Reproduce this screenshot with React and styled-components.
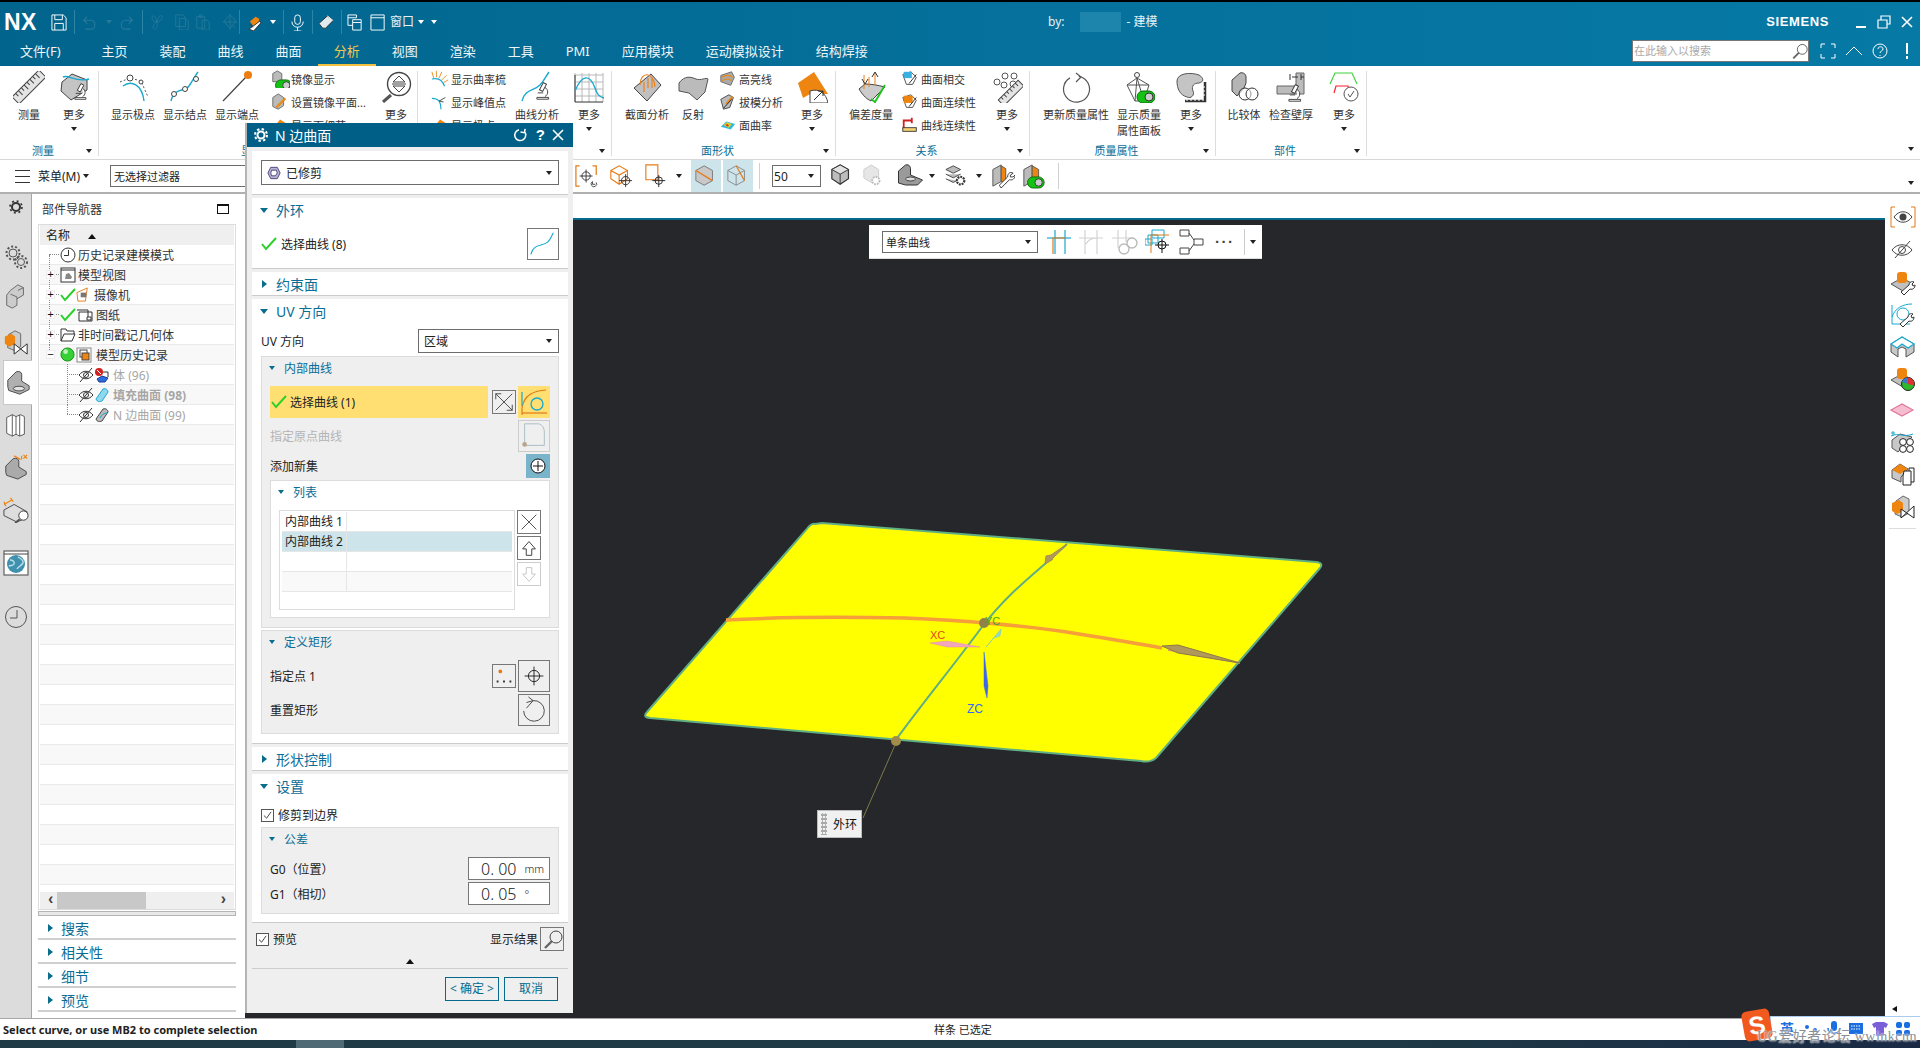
import React from 'react';
import styled, { createGlobalStyle } from 'styled-components';

const GlobalStyle = createGlobalStyle`
  html, body { margin: 0; padding: 0; background: #fff; }
  * { box-sizing: border-box; }
  body { font-family: "Noto Sans", "Noto Sans CJK SC", sans-serif; font-size: 12px; color: #222; }
`;

const Svg = styled.svg`
  display: block;
  flex: none;
`;

const Ico = ({ s = 32, w, h, vb = '0 0 32 32', children }) => (
  <Svg width={w || s} height={h || s} viewBox={vb} fill="none">{children}</Svg>
);

const Micro = ({ x = 0, y = 0, s = 1 }) => (
  <g transform={`translate(${x} ${y}) scale(${s})`} stroke="#333" strokeWidth="1">
    <rect x="6" y="0" width="4" height="9" fill="#fff" transform="rotate(28 8 4)" />
    <path d="M10 5c4 2 4 8 0 10M1 16h13v2H1z" fill="#fff" />
    <path d="M2 11h6" />
  </g>
);

const Toggle = ({ x = 0, y = 0 }) => (
  <g transform={`translate(${x} ${y})`}>
    <rect x="0" y="0" width="18" height="12" rx="6" fill="#13c313" stroke="#0b6a0b" />
    <circle cx="12" cy="6" r="4" fill="#ccc" stroke="#333" />
  </g>
);

const I = {
  ruler: <g transform="rotate(-45 16 16)"><rect x="-3" y="11" width="38" height="10" fill="#e4e4e4" stroke="#444" /><path d="M2 11v4M6 11v6M10 11v4M14 11v6M18 11v4M22 11v6M26 11v4M30 11v6" stroke="#444" /></g>,
  surfMicro: <><path d="M4 11L14 3l15 6v10L13 29 3 20z" fill="#c4c4c4" stroke="#444" /><path d="M5 6c6-3 12 6 26 2" stroke="#18a8d0" strokeWidth="1.4" /><Micro x={16} y={13} s={0.85} /></>,
  poles: <><path d="M6 15c8-6 19-2 21 15" stroke="#18a8d0" strokeWidth="1.4" /><path d="M3 11l10-4 11 3 7 16" stroke="#555" strokeDasharray="2 2" /><circle cx="13" cy="7" r="3" fill="#fff" stroke="#444" /><circle cx="24" cy="11" r="2" fill="#fff" stroke="#444" /></>,
  knots: <><path d="M2 30c3-14 14-9 18-15s6-10 9-14" stroke="#18a8d0" strokeWidth="1.4" /><circle cx="5" cy="23" r="2.5" fill="#fff" stroke="#444" /><circle cx="16" cy="18" r="2.5" fill="#fff" stroke="#444" /><circle cx="27" cy="8" r="2.5" fill="#fff" stroke="#444" /></>,
  endpoint: <><path d="M2 30L25 6" stroke="#444" strokeWidth="1.2" /><circle cx="27" cy="4" r="4" fill="#ee7d11" /></>,
  magDiamond: <><circle cx="19" cy="13" r="11.5" fill="#fff" stroke="#444" strokeWidth="1.4" /><path d="M11 24l-8 7" stroke="#555" strokeWidth="3" /><path d="M13 11l6-6 6 6zM13 15l6 6 6-6z" fill="#fff" stroke="#444" /><path d="M12 13h14" stroke="#444" /></>,
  curveMicro: <><path d="M1 30c3-12 12-10 18-16 4-4 6-9 9-13" stroke="#18a8d0" strokeWidth="1.4" /><Micro x={15} y={12} s={0.9} /></>,
  graph: <><path d="M2 2v29M9 2v29M16 2v29M23 2v29M30 2v29M2 4h28M2 11h28M2 18h28M2 25h28" stroke="#b8b8b8" /><path d="M2 4v27h28" stroke="#333" /><path d="M2 20c7-17 15-17 20-3 2 6 4 9 9 10" stroke="#18a8d0" strokeWidth="1.4" /></>,
  section: <><path d="M3 17L20 3l10 11-14 16z" fill="#c0c0c0" stroke="#444" /><path d="M9 14c0-14 14-14 15 2M13 11v10M17 7v10M21 7v10" stroke="#ee7d11" strokeWidth="1.1" /></>,
  reflect: <path d="M2 12c6-8 12-6 17-4s10-2 12 0l-3 13-8 8-8-7-10-2z" fill="#bbb" stroke="#555" />,
  moreSurf: <><path d="M2 12L18 1l14 22H14L7 27z" fill="#ee8510" /><path d="M14 32V20c9-3 16 2 18 12z" fill="#fff" stroke="#444" /><path d="M18 29l9-9M22 20h5v5" stroke="#333" /></>,
  deviation: <><path d="M4 18c5 8 8 10 12 12l14-14c-8-2-14-3-20-3z" fill="#ccc" stroke="#444" /><path d="M9 4v14M20 2v12M14 6v10" stroke="#ee7d11" /><path d="M7 8l3 5 3-5M17 6l3-5 3 5" stroke="#333" /><path d="M16 28l4 3L30 14" stroke="#21c521" strokeWidth="2" /></>,
  circlesRuler: <><g stroke="#555" fill="#fff"><circle cx="6" cy="11" r="3" /><circle cx="14" cy="5" r="3" /><circle cx="23" cy="5" r="3" /><circle cx="13" cy="14" r="3" /><circle cx="22" cy="13" r="3" /></g><g transform="rotate(-45 20 22)"><rect x="6" y="18" width="28" height="8" fill="#e4e4e4" stroke="#444" /><path d="M10 18v3M14 18v4M18 18v3M22 18v4M26 18v3M30 18v4" stroke="#444" /></g></>,
  update: <><path d="M21 6a13 13 0 1 1-9 0" stroke="#555" strokeWidth="1.2" transform="rotate(-10 16 18)" /><path d="M16 2l5 4-5 5" stroke="#555" strokeWidth="1.2" /></>,
  showPanel: <><path d="M14 7L4 14l8 16h9l5-16zM4 14h22M14 7l-2 23M14 7l7 23" stroke="#555" fill="#fff" /><circle cx="14" cy="4" r="2.5" fill="#fff" stroke="#444" /><Toggle x={14} y={20} /></>,
  blobRuler: <><path d="M2 10C2 2 16 1 24 4c5 3 5 7 0 8-5 0-8 3-6 8 2 4-2 8-6 6C5 24 2 18 2 10z" fill="#c4c4c4" stroke="#555" /><path d="M30 11v19H10" stroke="#333" strokeWidth="2.5" /><path d="M12 28v2M16 28v2M20 28v2M24 28v2M28 28v2M28 24h2M28 20h2M28 16h2" stroke="#fff" /></>,
  compare: <><path d="M4 20V9L12 2c3-1 6 1 6 4v6l-2 5-7 8z" fill="#b5b5b5" stroke="#444" /><circle cx="17" cy="23" r="6" fill="#fff" fillOpacity=".5" stroke="#333" /><circle cx="24" cy="23" r="6" fill="#fff" fillOpacity=".5" stroke="#333" /></>,
  wall: <><path d="M2 15h19V2h8v21H2z" fill="#bcbcbc" stroke="#666" /><path d="M17 6h6M29 6h-3M15 3v6M26 3v6" stroke="#333" /><Micro x={13} y={14} s={0.9} /></>,
  qualityCheck: <><path d="M2 13l5-11h17l5 11" stroke="#3ed43e" strokeWidth="1.2" /><path d="M6 22l2-7h12l2 7" stroke="#ff2030" strokeWidth="1.2" /><circle cx="23" cy="23" r="7" fill="#fff" stroke="#555" /><path d="M20 23l2 3 4-6" stroke="#555" /></>,
};

const Sm = {
  mirror: <><path d="M2 4l5-3 5 3v9H2z" fill="#bbb" stroke="#666" /><Toggle x={5} y={11} /></>,
  setMirror: <><path d="M2 5l6-4 6 4v9l-6 4-6-3z" fill="#bbb" stroke="#666" /><path d="M6 16l7-7 3-3" stroke="#e88a1c" strokeWidth="2.5" /></>,
  third: <path d="M2 14l8-10 8 5-6 8z" fill="#ee8510" />,
  comb: <><path d="M1 10c8-2 12 2 14 8" stroke="#18a8d0" strokeWidth="1.3" /><path d="M3 9L1 2M6 8l0-7M9 9l3-7M12 11l5-5M14 14l5-3" stroke="#ee8510" /></>,
  peak: <><path d="M1 6c7 0 10 3 10 12" stroke="#18a8d0" strokeWidth="1.3" /><path d="M9 9l7-4M9 9l5 1" stroke="#444" /></>,
  highlight: <><path d="M2 6l12-4 3 6-4 9-11-4z" fill="#aaa" stroke="#666" /><path d="M3 8c5-3 8-3 12 0M3 12c5-3 8-3 11 0" stroke="#ee8510" strokeWidth="1.2" /></>,
  draft: <><path d="M2 7l9-5 5 3-4 11-7 2z" fill="#bbb" stroke="#444" /><path d="M8 12l7-8" stroke="#ee8510" strokeWidth="2" /><path d="M5 17l9-10" stroke="#222" /></>,
  curvature: <><path d="M2 12l6-6 10 3-5 6z" fill="#3bd" /><path d="M5 10l4-3 5 2-3 4z" fill="#e8d020" /><path d="M7 10l2-1 2 1-1 2z" fill="#e03020" /></>,
  intersect: <><path d="M2 5l9-3 6 6-4 8H6z" fill="#fff" stroke="#444" /><rect x="3" y="2" width="9" height="7" fill="#3ab0e0" /><path d="M9 15l8-10" stroke="#222" /></>,
  contSurf: <><path d="M2 5l9-3 6 6-4 8H6z" fill="#fff" stroke="#444" /><rect x="3" y="3" width="10" height="8" fill="#ee8510" /><path d="M9 15l8-10" stroke="#222" /></>,
  contCurve: <><path d="M3 15V5h9" stroke="#d02020" strokeWidth="2" /><path d="M12 2v6" stroke="#d02020" strokeWidth="2" /><rect x="2" y="13" width="15" height="4" fill="#f7d070" stroke="#333" /></>,
};

const Qa = {
  save: <><path d="M1 1h12l3 3v13H1z" stroke="#fff" /><path d="M4 1v5h8V1M4 17v-7h9v7" stroke="#fff" /></>,
  undo: <path d="M3 7h8c6 0 6 10 0 10H5M7 3L3 7l4 4" stroke="#27799a" strokeWidth="1.3" />,
  redo: <path d="M14 7H6c-6 0-6 10 0 10h6M10 3l4 4-4 4" stroke="#27799a" strokeWidth="1.3" />,
  fan: <path d="M9 9C3 9 2 3 5 2c2 0 3 4 4 7zM9 9c6-1 7-6 5-7-3-1-4 4-5 7zM9 9c-4 2-6 7-3 8 3 0 4-4 3-8z" stroke="#27799a" />,
  copy: <path d="M2 1h8l3 3v10H2zM6 5h7l3 3v10H6z" stroke="#27799a" />,
  paste: <path d="M2 3h9v13H2zM5 1h3v3H5zM8 7h6l2 2v9H8z" stroke="#27799a" />,
  sel: <path d="M9 1l7 7-7 8-7-8zM1 9h16M9 0v18M11 12l4 4" stroke="#27799a" />,
  tool: <><path d="M3 8l6-5 4 2-1 6-5 2z" fill="#ee8510" /><path d="M3 11l3 3M5 14l8-6 2 1-8 9-5-2z" fill="#fff" stroke="#333" /></>,
  mic: <><rect x="5" y="1" width="6" height="10" rx="3" stroke="#fff" /><path d="M2 8c0 8 12 8 12 0M8 14v4M4 18h8" stroke="#fff" /></>,
  erase: <><path d="M1 10l9-8 6 5-8 8H5z" fill="#dfe9ee" stroke="#333" /><path d="M10 2l6 5" stroke="#fff" /></>,
  win1: <path d="M1 1h9v3H1zM1 4v8h5M6 6h9v3H6zM6 9v8h9V9" stroke="#fff" />,
  win2: <path d="M1 1h14v16H1zM1 4h14" stroke="#fff" />,
};

const Bar = {
  orangeTrim: <><path d="M5 2H1v22h4M19 2h4v10" stroke="#e57a14" strokeWidth="1.3" /><circle cx="12" cy="13" r="4.5" stroke="#333" /><path d="M12 6v14M5 13h14" stroke="#333" /><path d="M23 20a3 3 0 1 1-4-1m0 0v3h3" stroke="#444" /></>,
  orangeCube: <><path d="M2 7l9-5 9 5v9l-9 6-9-6zM2 7l9 5 9-5M11 12v10" stroke="#e57a14" strokeWidth="1.2" fill="#fff" /><circle cx="18" cy="18" r="4.5" stroke="#333" /><path d="M18 11v14M11 18h14" stroke="#333" /></>,
  orangeRect: <><path d="M2 1h13v16H2z" stroke="#e57a14" strokeWidth="1.2" /><circle cx="16" cy="18" r="4" stroke="#222" /><path d="M16 12v13M9 18h14" stroke="#222" /></>,
  view1: <><path d="M2 7l9-5 9 5v11l-9 5-9-5z" fill="#c8c8c8" stroke="#777" /><path d="M2 7l18 11" stroke="#e57a14" strokeWidth="1.4" /></>,
  view2: <><path d="M2 7l9-5 9 5v11l-9 5-9-5zM11 12v11M2 7l9 5 9-5" stroke="#888" /><path d="M11 2l9 16" stroke="#e57a14" strokeWidth="1.2" /></>,
  cube: <><path d="M2 6l9-5 9 5v10l-9 6-9-6z" fill="#bdbdbd" stroke="#333" strokeWidth="1.3" /><path d="M2 6l9 5 9-5L11 1z" fill="#e2e2e2" stroke="#333" /><path d="M11 11v11" stroke="#333" /></>,
  cubeGear: <><path d="M2 6l8-5 8 5v9l-8 5-8-5z" fill="#e6e6e6" stroke="#ccc" /><circle cx="15" cy="18" r="4" fill="#fff" stroke="#bbb" strokeWidth="2" strokeDasharray="2 1" /></>,
  bracket: <><path d="M2 20V8l7-6c4-1 5 2 5 4v6l12 5-5 5H9z" fill="#9a9a9a" stroke="#333" /><ellipse cx="14" cy="16" rx="5" ry="2" fill="#ddd" stroke="#444" /></>,
  stack: <><path d="M2 6l8-4 8 4-8 4zM2 11l8 4 8-4M2 16l8 4 4-2" fill="#bbb" stroke="#444" /><circle cx="18" cy="18" r="4" fill="#fff" stroke="#333" strokeWidth="2.4" strokeDasharray="2 1" /></>,
  doorWrench: <><path d="M2 6l9-5v18l-9 5z" fill="#bbb" stroke="#555" /><path d="M11 2l5 3v16l-5-2z" fill="#ee8510" stroke="#555" /><path d="M9 23l9-9c0-4 3-6 6-4l-3 2v2h3l2-2c0 4-3 6-6 5l-9 9z" fill="#fff" stroke="#333" /></>,
  doorToggle: <><path d="M2 6l9-5v18l-9 5z" fill="#bbb" stroke="#555" /><path d="M11 2l7 4v14l-7-1z" fill="#ee8510" stroke="#555" /><Toggle x={6} y={14} /></>,
};

const Float = {
  trim1: <><path d="M8 1v24M18 1v24" stroke="#18a8d0" strokeWidth="1.2" /><path d="M0 9h24" stroke="#18a8d0" strokeWidth="1.2" /><path d="M6 25V9h12" stroke="#e57a14" strokeWidth="1.2" /></>,
  trim2: <path d="M6 1v24M18 1v24M0 9h24M7 15c2-4 6-6 11-6" stroke="#d2d2d2" strokeWidth="1.2" />,
  trim3: <><path d="M6 1v18M14 1v12M0 9h22" stroke="#d2d2d2" strokeWidth="1.2" /><circle cx="20" cy="14" r="5" stroke="#bbb" strokeWidth="1.4" /><circle cx="12" cy="20" r="5" stroke="#bbb" strokeWidth="1.4" /></>,
  rects: <><path d="M7 1h12v8H7zM3 6h10v8H3zM0 10h7v6H0z" stroke="#18a8d0" fill="#fff" /><path d="M6 24V6h18" stroke="#e57a14" /><circle cx="17" cy="16" r="4" stroke="#111" /><path d="M17 10v14M10 16h14" stroke="#111" /></>,
  tree: <path d="M1 1h9v6H1zM1 19h9v6H1zM15 10h9v6h-9zM10 4l5 7M10 22l5-7" stroke="#444" />,
};

const Rail = {
  gear: <><circle cx="8" cy="8" r="4" stroke="#333" strokeWidth="2" /><circle cx="8" cy="8" r="6" stroke="#333" strokeWidth="1.6" strokeDasharray="2 2.7" /></>,
  gears: <g stroke="#555"><circle cx="9" cy="8" r="4" /><circle cx="9" cy="8" r="6.5" strokeWidth="2" strokeDasharray="2 2" /><circle cx="17" cy="17" r="3.5" /><circle cx="17" cy="17" r="6" strokeWidth="2" strokeDasharray="2 2" /></g>,
  blocks: <><path d="M8 8l8-6 6 3v8l-7 4v7l-5 3-6-3V13z" fill="#ccc" stroke="#666" /><path d="M8 12l7 3v2M16 8l6-3" stroke="#666" /></>,
  orangeBow: <><path d="M6 6l7-4 6 3v14l-7 4-7-3z" fill="#ccc" stroke="#666" /><path d="M2 8l7-3 4 3v8l-6 3-5-3z" fill="#ee8510" /><path d="M12 16l14 11V16L12 27z" fill="#fff" stroke="#222" /></>,
  bracket: <><path d="M3 18V11l9-9c3-1 6 0 6 3v7l8 5v4l-10 5-12-4z" fill="#b0b0b0" stroke="#444" /><ellipse cx="15" cy="20" rx="6" ry="2.5" fill="#e2e2e2" stroke="#444" /></>,
  book: <path d="M4 7l6-3 4 2v19l-4 2-6-3zM10 4v23M14 6l5-2 4 2v19l-5 2-4-2M18 4v23" stroke="#555" fill="#fff" />,
  dimBracket: <><path d="M3 20V13l8-8c3-1 6 0 6 3v6l8 5v3l-9 5-12-4z" fill="#aaa" stroke="#444" /><path d="M12 2l7 4M20 6V2M22 1l4 4M26 1l-4 4" stroke="#ee8510" strokeWidth="1.3" /></>,
  dimMag: <><path d="M1 14l11-6 14 8v6l-11 5-14-7z" fill="#ddd" stroke="#444" /><path d="M1 8l9-5M1 5l2 5M8 1l3 4" stroke="#ee8510" strokeWidth="1.3" /><circle cx="22" cy="20" r="5" fill="#fff" stroke="#333" /><path d="M18 24l-5 4" stroke="#555" strokeWidth="2" /></>,
  globe: <><rect x="1" y="1" width="24" height="24" stroke="#444" fill="#fff" /><path d="M1 4h24" stroke="#444" /><circle cx="13" cy="14" r="9" fill="#3f91ad" /><path d="M7 10c3 0 5 2 4 4s-3 1-5 2M15 7c3 2 6 3 5 6-2 3-5 4-6 6" stroke="#bfe0ea" strokeWidth="1.4" /></>,
  clock: <><circle cx="12" cy="12" r="10.5" stroke="#555" /><path d="M13 5v8H6" stroke="#555" /></>,
};

const RR = {
  show: <><path d="M1 1h4M1 1v20h4M21 1h4v20h-4" stroke="#e57a14" /><path d="M4 11c5-7 13-7 18 0-5 7-13 7-18 0z" stroke="#444" /><circle cx="13" cy="11" r="3.5" fill="#444" /></>,
  hide: <><path d="M2 12c5-7 15-7 20 0-5 7-15 7-20 0z" stroke="#444" /><circle cx="12" cy="12" r="3.5" stroke="#444" /><path d="M5 20L20 3" stroke="#444" /></>,
  tank: <><path d="M1 14l11-6 11 6-10 7z" fill="#c0c0c0" stroke="#555" /><rect x="7" y="2" width="10" height="11" rx="3" fill="#ee8510" /><path d="M11 22l8-7c0-3 3-4 5-3l-2 2 1 2 2-1c0 3-2 5-5 4l-6 6z" fill="#fff" stroke="#333" /></>,
  curveWrench: <><path d="M2 15C5 6 13 2 22 2M2 3v19h18" stroke="#18a8d0" /><circle cx="13" cy="12" r="6" stroke="#18a8d0" /><path d="M10 22l8-7c0-3 3-4 5-3l-2 2 1 2 2-1c0 3-2 5-5 4l-6 6z" fill="#fff" stroke="#333" /></>,
  uBlock: <><path d="M1 10l11-7 12 7v8l-8 5V15l-4-2-4 2v8l-7-5z" fill="#c8c8c8" stroke="#555" /><path d="M1 10l11-7 12 7-6 4-6-4-5 4z" fill="#fff" stroke="#18a8d0" strokeWidth="1.3" /></>,
  tankPie: <><path d="M1 14l11-6 11 6-10 7z" fill="#c0c0c0" stroke="#555" /><rect x="7" y="2" width="10" height="11" rx="3" fill="#ee8510" /><circle cx="18" cy="18" r="6.5" fill="#2db82d" stroke="#222" /><path d="M18 18V11.5a6.5 6.5 0 0 1 6 8z" fill="#e03030" /><path d="M18 18l-6-2a6.5 6.5 0 0 1 6-4.5z" fill="#3a78c8" /></>,
  diamond: <path d="M1 12l11-6 11 6-11 6z" fill="#f6bdd0" stroke="#e0789c" strokeWidth="1.2" />,
  rings: <><path d="M2 10l8-6 12 3-6 6-8 9-6-4z" fill="#c8c8c8" stroke="#555" /><path d="M1 6c8-4 12 2 22-2M3 1v5M1 3h4" stroke="#18a8d0" /><g stroke="#222" fill="#fff"><circle cx="13" cy="12" r="3.4" /><circle cx="20" cy="12" r="3.4" /><circle cx="13" cy="19" r="3.4" /><circle cx="20" cy="19" r="3.4" /></g></>,
  copy: <><path d="M2 8l8-6 8 5-7 8v5l-9-4z" fill="#c8c8c8" stroke="#555" /><path d="M2 8l8-6 8 5-8 5z" fill="#ee8510" /><path d="M14 9h7v14h-8v-9zM19 9v-3h5v14h-3" fill="#fff" stroke="#222" /></>,
  bow: <><path d="M6 7l7-5 6 3v14l-7 4-7-3z" fill="#ccc" stroke="#666" /><path d="M2 9l7-3 4 3v8l-6 3-5-3z" fill="#ee8510" /><path d="M11 15l13 9V12L11 24z" fill="#fff" stroke="#222" /></>,
};

const Dlg = {
  trimmed: <><path d="M2 8l3-6h7l3 6-3 6H5z" fill="#b8b3d6" stroke="#4a4478" /><path d="M6 5h5l1 3-2 3H6L5 8z" fill="#fff" stroke="#4a4478" /></>,
  check: <path d="M1 8l4 5L15 2" stroke="#2bd02b" strokeWidth="2" />,
  curve: <path d="M3 27c3-12 12-8 18-13 3-3 4-6 6-10" stroke="#18a8d0" strokeWidth="1.2" />,
  cross: <path d="M3 3l18 18M21 3L3 21M3 3v6M3 3h6M21 21v-6M21 21h-6" stroke="#444" />,
  curveCircle: <><path d="M4 29V22C6 9 15 5 28 4" stroke="#e57a14" strokeWidth="1.2" /><path d="M4 27h25" stroke="#e57a14" strokeWidth="1.2" /><path d="M4 6v14" stroke="#18a8d0" strokeWidth="1.2" /><circle cx="19" cy="18" r="6" stroke="#18a8d0" strokeWidth="1.3" /></>,
  origin: <><path d="M6 26V3h14c5 0 7 5 7 9v14H6" stroke="#a9bcc4" /><circle cx="6" cy="25" r="2.5" fill="#b7a68c" /></>,
  plus: <><circle cx="12" cy="12" r="7" fill="#fff" stroke="#111" /><path d="M12 7v10M7 12h10" stroke="#111" /></>,
  close: <path d="M4 4l16 16M20 4L4 20" stroke="#444" />,
  up: <path d="M12 5l7 8h-4v7H9v-7H5z" stroke="#333" />,
  down: <path d="M12 20l7-8h-4V5H9v7H5z" stroke="#c4c4c4" />,
  points: <><circle cx="8" cy="7" r="2" fill="#e57a14" /><path d="M4 18h2M11 18h2M18 18h2" stroke="#333" strokeWidth="2" /></>,
  cross2: <><circle cx="16" cy="16" r="6" stroke="#222" /><path d="M16 6v20M6 16h20" stroke="#222" /></>,
  reset: <path d="M15 6A11 11 0 1 1 5 17M15 6L8 14M10 2l5 4-7 2" stroke="#444" />,
  mag: <><circle cx="15" cy="9" r="6" stroke="#444" /><path d="M11 13l-7 7" stroke="#666" strokeWidth="2.4" /></>,
};

const Root = styled.div`
  position: relative;
  width: 1920px;
  height: 1048px;
  overflow: hidden;
  display: flex;
  flex-direction: column;
  background: #fff;
  border-top: 2px solid #000;
`;

const Head = styled.header`
  height: 64px;
  flex: none;
  color: #fff;
  background: linear-gradient(90deg, #01648c 0%, #05709b 50%, #0679a5 100%);
`;

const TitleRow = styled.div`
  height: 34px;
  padding-top: 6px;
  display: flex;
  align-items: center;
`;

const Quick = styled.div`
  width: 1048px;
  flex: none;
  display: flex;
  align-items: center;
`;

const NxLogo = styled.span`
  width: 42px;
  padding-left: 4px;
  font: bold 23px/28px "Liberation Sans", sans-serif;
  letter-spacing: .5px;
  flex: none;
`;

const QaSlot = styled.span`
  display: block;
  flex: none;
  margin-left: ${p => p.$ml || 0}px;
`;

const QaSep = styled.span`
  display: block;
  width: 1px;
  height: 24px;
  flex: none;
  background: #2d84a6;
  margin-left: ${p => p.$ml || 0}px;
`;

const Tri = styled.span`
  display: block;
  flex: none;
  width: 0;
  height: 0;
  border-left: ${p => p.$s || 3}px solid transparent;
  border-right: ${p => p.$s || 3}px solid transparent;
  border-top: ${p => (p.$s || 3) + 1}px solid ${p => p.$c || '#222'};
  margin-left: ${p => p.$ml || 0}px;
`;

const TitleText = styled.span`
  font-size: 12px;
  line-height: 28px;
  color: #e8f2f6;
  white-space: nowrap;
  margin-left: ${p => p.$ml || 0}px;
`;

const Redacted = styled.span`
  display: block;
  width: 41px;
  height: 20px;
  margin-left: 16px;
  margin-right: 5px;
  background: #1d85ac;
`;

const WinGroup = styled.div`
  margin-left: auto;
  display: flex;
  align-items: center;
  padding-right: 6px;
`;

const Siemens = styled.span`
  font: 900 13px/28px "Liberation Sans", sans-serif;
  letter-spacing: .6px;
  margin-right: 26px;
`;

const TabRow = styled.nav`
  height: 30px;
  display: flex;
  align-items: stretch;
  padding-left: 4px;
`;

const Tab = styled.div`
  padding: 0 16px;
  font-size: 13px;
  line-height: 30px;
  white-space: nowrap;
  color: ${p => (p.$on ? '#f5c64a' : '#eef5f8')};
  border-bottom: 2px solid ${p => (p.$on ? '#f0c040' : 'transparent')};
  margin-left: ${p => p.$ml || 0}px;
`;

const SearchBox = styled.div`
  position: absolute;
  top: 38px;
  left: 1632px;
  width: 177px;
  height: 22px;
  background: #fff;
  border: 1px solid #777;
  color: #aaa;
  font-size: 11px;
  line-height: 20px;
  padding-left: 1px;
  display: flex;
  justify-content: space-between;
  align-items: center;
`;

const HeadTools = styled.div`
  position: absolute;
  top: 40px;
  left: 1820px;
  display: flex;
  align-items: center;
`;

const Ribbon = styled.section`
  height: 94px;
  flex: none;
  display: flex;
  border-bottom: 1px solid #d8d8d8;
  position: relative;
`;

const Group = styled.div`
  width: ${p => p.$w}px;
  flex: none;
  height: 85px;
  margin-top: 5px;
  padding-left: ${p => p.$pl || 0}px;
  border-right: 1px solid #ddd;
  position: relative;
`;

const GroupBody = styled.div`
  display: flex;
  height: 70px;
`;

const GroupFoot = styled.div`
  position: absolute;
  left: 0;
  right: 0;
  bottom: -3px;
  height: 16px;
  display: flex;
  align-items: center;
  padding-right: 6px;
`;

const GroupTitle = styled.span`
  flex: 1;
  text-align: center;
  color: #0a6d96;
  font-size: 11px;
  line-height: 16px;
`;

const Big = styled.div`
  width: ${p => p.$w || 42}px;
  margin-left: ${p => p.$ml || 0}px;
  flex: none;
  display: flex;
  flex-direction: column;
  align-items: center;
  font-size: 11px;
  line-height: 16px;
  text-align: center;
  color: #333;
`;

const BigLabel = styled.div`
  margin-top: 4px;
  white-space: nowrap;
`;

const BigArrow = styled(Tri)`
  margin-top: 4px;
`;

const Stack = styled.div`
  width: ${p => p.$w}px;
  margin-left: ${p => p.$ml || 0}px;
  margin-top: -4px;
  flex: none;
`;

const SmallTool = styled.div`
  height: 23px;
  display: flex;
  align-items: center;
  gap: ${p => p.$gap ?? 1}px;
  font-size: 11px;
  color: #333;
  white-space: nowrap;
`;

const EndArrow = styled(Tri)`
  position: absolute;
  left: 1908px;
  top: ${p => p.$top}px;
`;

const Toolbar = styled.section`
  height: 34px;
  flex: none;
  display: flex;
  align-items: center;
  border-bottom: 2px solid #b0b0b0;
  position: relative;
`;

const Burger = styled.span`
  display: block;
  width: 15px;
  height: 13px;
  margin-left: 15px;
  border-top: 1px solid #333;
  border-bottom: 1px solid #333;
  position: relative;
  &::after {
    content: "";
    position: absolute;
    left: 0;
    right: 0;
    top: 5px;
    height: 1px;
    background: #333;
  }
`;

const MenuLabel = styled.span`
  margin-left: 8px;
  font-size: 12px;
  white-space: nowrap;
`;

const Select = styled.div`
  width: ${p => p.$w}px;
  height: ${p => p.$h || 22}px;
  flex: none;
  margin-left: ${p => p.$ml || 0}px;
  border: 1px solid #6c6c6c;
  background: #fff;
  display: flex;
  align-items: center;
  padding: 0 6px 0 ${p => p.$pl ?? 3}px;
  gap: 4px;
  font-size: ${p => p.$fs || 12}px;
  white-space: nowrap;
  color: #222;
`;

const SelectText = styled.span`
  flex: 1;
`;

const TbSlot = styled.span`
  display: block;
  flex: none;
  margin-left: ${p => p.$ml || 0}px;
  background: ${p => (p.$on ? '#cde4ea' : 'transparent')};
  padding: ${p => (p.$on ? '3px' : '0')};
`;

const TbSep = styled.span`
  display: block;
  flex: none;
  width: 1px;
  height: 26px;
  background: #d0d0d0;
  margin-left: ${p => p.$ml || 0}px;
`;

const Main = styled.main`
  flex: none;
  height: 824px;
  display: flex;
`;

const LeftRail = styled.aside`
  width: 32px;
  flex: none;
  background: #dcdcdc;
  border-right: 1px solid #a6a6a6;
  display: flex;
  flex-direction: column;
`;

const RailItem = styled.div`
  height: ${p => p.$h}px;
  margin-top: ${p => p.$mt || 0}px;
  margin-left: ${p => (p.$on ? 3 : 0)}px;
  margin-right: ${p => (p.$on ? -1 : 0)}px;
  flex: none;
  display: flex;
  align-items: center;
  justify-content: center;
  background: ${p => (p.$on ? '#fff' : 'transparent')};
  border: ${p => (p.$on ? '1px solid #c8c8c8' : '0')};
  border-right: 0;
  position: relative;
  z-index: 1;
`;

const Navigator = styled.aside`
  width: 213px;
  flex: none;
  display: flex;
  flex-direction: column;
  padding-left: 6px;
  padding-right: 9px;
`;

const NavHead = styled.div`
  height: 30px;
  flex: none;
  display: flex;
  align-items: center;
  justify-content: space-between;
  padding: 0 7px 0 4px;
  font-size: 12px;
  color: #333;
`;

const Maximize = styled.span`
  display: block;
  width: 12px;
  height: 10px;
  border: 1px solid #111;
  border-top-width: 2px;
`;

const NavTable = styled.div`
  flex: none;
  height: 686px;
  border: 1px solid #dcdcdc;
  padding: 0 1px;
  display: flex;
  flex-direction: column;
  overflow: hidden;
`;

const NavHeader = styled.div`
  height: 20px;
  flex: none;
  background: #efefef;
  display: flex;
  align-items: center;
  padding-left: 6px;
  gap: 18px;
  font-size: 12px;
`;

const Rows = styled.div`
  flex: 1;
  overflow: hidden;
`;

const TreeRow = styled.div`
  height: 20px;
  display: flex;
  align-items: center;
  position: relative;
  padding-left: ${p => p.$pl || 20}px;
  gap: ${p => p.$gap ?? 2}px;
  border-bottom: 1px solid #eaeaea;
  background: ${p => (p.$alt ? '#f8f8f8' : '#fff')};
  white-space: nowrap;
  font-size: 12px;
  font-weight: ${p => (p.$bold ? 700 : 400)};
  color: ${p => (p.$dim ? '#a6a6a6' : '#333')};
`;

const Expander = styled.span`
  position: absolute;
  left: 6px;
  top: 5px;
  width: 9px;
  height: 9px;
  background: #fff;
  color: #111;
  font: 11px/8px "Liberation Mono", monospace;
  text-align: center;
  border: 1px solid #eee;
`;

const GuideV = styled.span`
  position: absolute;
  left: ${p => p.$x}px;
  top: ${p => p.$t ?? -1}px;
  bottom: ${p => p.$b ?? -1}px;
  border-left: 1px dotted #888;
`;

const GuideH = styled.span`
  position: absolute;
  left: ${p => p.$x}px;
  width: ${p => p.$w}px;
  top: 9px;
  border-top: 1px dotted #888;
`;

const HScroll = styled.div`
  height: 17px;
  flex: none;
  background: #efefef;
  display: flex;
  align-items: center;
  padding: 0 6px;
  position: relative;
`;

const Thumb = styled.span`
  display: block;
  position: absolute;
  left: 17px;
  width: 89px;
  top: 0;
  bottom: 0;
  background: #c8c8c8;
`;

const ScrollRow = styled.div`
  width: 100%;
  display: flex;
  justify-content: space-between;
  color: #444;
  font: 700 16px/15px "Liberation Mono", monospace;
`;

const Splitter = styled.div`
  height: 5px;
  flex: none;
  margin-top: 1px;
  background: #e8e8e8;
  border: 1px solid #b4b4b4;
`;

const NavFold = styled.div`
  height: 24px;
  flex: none;
  display: flex;
  align-items: center;
  gap: 8px;
  padding-left: 10px;
  border-bottom: 2px solid #cfcfcf;
  color: #0a6d96;
  font-size: 14px;
  padding-top: 2px;
`;

const RightTri = styled.span`
  display: block;
  flex: none;
  width: 0;
  height: 0;
  border-top: ${p => p.$s || 4.5}px solid transparent;
  border-bottom: ${p => p.$s || 4.5}px solid transparent;
  border-left: ${p => (p.$s || 4.5) + 1}px solid #0a6d8c;
`;

const Viewport = styled.div`
  flex: none;
  width: 1640px;
  display: flex;
  flex-direction: column;
`;

const ViewTop = styled.div`
  height: 26px;
  flex: none;
  background: #fff;
  border-bottom: 2px solid #056a8c;
`;

const Canvas = styled.div`
  flex: 1;
  background: #25272b;
  position: relative;
`;

const ModelSvg = styled.svg`
  position: absolute;
  left: 0;
  top: 0;
  width: 100%;
  height: 100%;
`;

const FloatBar = styled.div`
  position: absolute;
  left: 624px;
  top: 5px;
  width: 393px;
  height: 34px;
  background: #fff;
  border-bottom: 1px solid #ddd;
  display: flex;
  align-items: center;
`;

const FloatSlot = styled.span`
  display: block;
  flex: none;
  margin-left: ${p => p.$ml}px;
`;

const FloatSep = styled.span`
  display: block;
  flex: none;
  width: 1px;
  height: 26px;
  background: #ccc;
  margin-left: 9px;
`;

const Dots = styled.span`
  display: block;
  flex: none;
  color: #444;
  font: 700 15px/16px "Liberation Sans", sans-serif;
  margin-left: 10px;
  letter-spacing: 1.5px;
`;

const Callout = styled.div`
  position: absolute;
  left: 572px;
  top: 590px;
  width: 45px;
  height: 28px;
  background: #f1f1f1;
  border: 1px solid #bbb;
  display: flex;
  align-items: center;
  font-size: 12px;
  color: #111;
  padding-left: 3px;
  gap: 6px;
`;

const Grip = styled.span`
  display: block;
  width: 6px;
  height: 22px;
  background-image: radial-gradient(#aaa 1.1px, transparent 1.3px);
  background-size: 3px 4px;
`;

const RightRail = styled.aside`
  flex: 1;
  background: #fff;
  display: flex;
  flex-direction: column;
  align-items: center;
  padding-top: 9px;
`;

const RightItem = styled.div`
  height: 32px;
  flex: none;
  display: flex;
  align-items: center;
`;

const RightSep = styled.div`
  width: 27px;
  height: 1px;
  margin-top: 5px;
  background: #ddd;
`;

const Status = styled.footer`
  height: 22px;
  flex: none;
  border-top: 1px solid #a8a8a8;
  background: #fff;
  display: flex;
  align-items: center;
  padding-left: 3px;
  position: relative;
`;

const StatusText = styled.span`
  font: 700 11px/20px "Noto Sans", "Noto Sans CJK SC", sans-serif;
  color: #222;
`;

const StatusCenter = styled.span`
  position: absolute;
  left: 934px;
  top: 0;
  font-size: 11px;
  line-height: 21px;
  color: #222;
`;

const Taskbar = styled.div`
  flex: 1;
  background: linear-gradient(90deg, #1f3a45 0%, #1f3a45 70%, #1a2a45 100%);
  position: relative;
`;

const TaskPatch = styled.span`
  position: absolute;
  left: 296px;
  top: 0;
  bottom: 0;
  width: 48px;
  background: #4f6a75;
`;

const Ime = styled.div`
  position: absolute;
  left: 1770px;
  top: 1014px;
  width: 150px;
  height: 24px;
  background: #fff;
  border-top: 1px solid #a9cdf0;
  border-left: 1px solid #a9cdf0;
  display: flex;
  align-items: center;
  padding-left: 9px;
`;

const ImeLogo = styled.div`
  position: absolute;
  left: 1743px;
  top: 1008px;
  width: 28px;
  height: 30px;
  background: #f2591f;
  border-radius: 5px;
  transform: rotate(-10deg);
  color: #fff;
  font: 900 25px/30px "Liberation Sans", sans-serif;
  text-align: center;
`;

const ImeLang = styled.span`
  color: #1a6ee0;
  font-size: 14px;
  font-weight: 700;
  line-height: 24px;
`;

const ImeSlot = styled.span`
  display: block;
  flex: none;
  margin-left: ${p => p.$ml}px;
`;

const Watermark = styled.div`
  position: absolute;
  left: 1757px;
  top: 1026px;
  font: 14px/18px "Liberation Serif", "Noto Sans CJK SC", serif;
  letter-spacing: .5px;
  color: #8a8f96;
  text-shadow: 0 0 2px #fff, 0 0 2px #fff;
  white-space: nowrap;
`;

const MiniTri = styled.span`
  position: absolute;
  left: 1892px;
  top: 1004px;
  border-top: 3px solid transparent;
  border-bottom: 3px solid transparent;
  border-right: 5px solid #111;
`;

/* dialog */
const Dialog = styled.div`
  position: absolute;
  left: 245px;
  top: 121px;
  width: 328px;
  height: 890px;
  background: #efefef;
  border-left: 2px solid #b4b4b4;
  display: flex;
  flex-direction: column;
  z-index: 5;
`;

const DialogHead = styled.div`
  height: 24px;
  flex: none;
  background: #005f86;
  color: #fff;
  font-size: 14px;
  display: flex;
  align-items: center;
  padding: 0 8px 0 6px;
  gap: 6px;
`;

const DialogTitle = styled.span`
  flex: 1;
`;

const HeadBtn = styled.span`
  display: block;
  flex: none;
  margin-left: ${p => p.$ml || 0}px;
  font: 700 15px/24px "Liberation Sans", sans-serif;
`;

const DialogBody = styled.div`
  flex: none;
  padding: 4px 5px 0 5px;
  display: flex;
  flex-direction: column;
  gap: 3px;
`;

const Section = styled.section`
  height: ${p => p.$h}px;
  flex: none;
  background: #fff;
  border-bottom: 1px solid #ccc;
  padding: 0 9px;
  display: flex;
  flex-direction: column;
`;

const SecTitle = styled.div`
  height: 26px;
  flex: none;
  display: flex;
  align-items: center;
  padding-bottom: 2px;
  margin-left: ${p => (p.$closed ? 1 : -1)}px;
  gap: ${p => (p.$closed ? 9 : 8)}px;
  color: #0a6d96;
  font-size: 14px;
  white-space: nowrap;
`;

const BoxTitle = styled.div`
  height: 24px;
  flex: none;
  display: flex;
  align-items: center;
  padding-bottom: 2px;
  gap: 9px;
  margin-left: -1px;
  color: #0a6d96;
  font-size: 12px;
`;

const Row = styled.div`
  height: ${p => p.$h}px;
  flex: none;
  margin-top: ${p => p.$mt || 0}px;
  display: flex;
  align-items: center;
  justify-content: space-between;
  gap: ${p => p.$gap ?? 0}px;
  font-size: 12px;
  color: ${p => (p.$dim ? '#b4b4b4' : '#222')};
  white-space: nowrap;
`;

const Left = styled.span`
  display: flex;
  align-items: center;
  gap: ${p => p.$gap ?? 4}px;
`;

const Btn = styled.span`
  display: flex;
  align-items: center;
  justify-content: center;
  flex: none;
  width: ${p => p.$s}px;
  height: ${p => p.$s}px;
  border: 1px solid ${p => (p.$off ? '#ccc' : '#777')};
  background: ${p => p.$bg || 'transparent'};
  ${p => p.$flat && 'border: 0;'}
`;

const Inset = styled.div`
  flex: none;
  height: ${p => p.$h}px;
  margin-top: ${p => p.$mt || 0}px;
  background: #efefef;
  border: 1px solid #dcdcdc;
  padding: 0 8px;
  display: flex;
  flex-direction: column;
`;

const YellowRow = styled.div`
  flex: 1;
  align-self: stretch;
  background: #ffdf72;
  display: flex;
  align-items: center;
  gap: 3px;
  padding-left: 1px;
  margin-right: 4px;
`;

const Btns = styled.span`
  display: flex;
  align-items: center;
  gap: 2px;
`;

const ListBox = styled.div`
  flex: none;
  height: 138px;
  margin-top: 2px;
  background: #fff;
  border: 1px solid #dcdcdc;
  padding: 0 8px;
`;

const ListWrap = styled.div`
  display: flex;
  justify-content: space-between;
  margin-top: 5px;
`;

const Table = styled.div`
  width: 236px;
  height: 100px;
  border: 1px solid #dcdcdc;
  padding: 1px 2px;
`;

const TableRow = styled.div`
  height: 20px;
  display: grid;
  grid-template-columns: 65px 1fr;
  border-bottom: 1px solid #e6e6e6;
  background: ${p => (p.$sel ? '#cde4ea' : p.$alt ? '#f9f9f9' : '#fff')};
  font-size: 12px;
  line-height: 19px;
`;

const Cell = styled.span`
  padding-left: 3px;
  white-space: nowrap;
  border-right: 1px solid #e6e6e6;
`;

const ListBtns = styled.div`
  display: flex;
  flex-direction: column;
  gap: 2px;
`;

const CheckBox = styled.span`
  display: flex;
  align-items: center;
  justify-content: center;
  width: 13px;
  height: 13px;
  flex: none;
  border: 1px solid #555;
  background: #fff;
`;

const NumInput = styled.div`
  width: 82px;
  height: 23px;
  flex: none;
  background: #fff;
  border: 1px solid #777;
  display: flex;
  align-items: center;
  padding-left: 12px;
  gap: 8px;
  font-size: 16px;
  font-weight: 300;
  color: #222;
  white-space: pre;
`;

const Unit = styled.span`
  font-size: 11px;
`;

const Foot = styled.div`
  flex: 1;
  display: flex;
  flex-direction: column;
  padding: 0 9px 0 5px;
`;

const FootRow = styled.div`
  height: 24px;
  margin-top: 4px;
  flex: none;
  display: flex;
  align-items: center;
  justify-content: space-between;
  padding: 0 0 0 4px;
  font-size: 12px;
`;

const FootArrow = styled.div`
  height: 17px;
  flex: none;
  display: flex;
  align-items: center;
  justify-content: center;
  border-bottom: 1px solid #ccc;
  margin-top: 1px;
  margin-right: -4px;
`;

const UpTri = styled.span`
  display: block;
  width: 0;
  height: 0;
  margin-top: 3px;
  border-left: 4px solid transparent;
  border-right: 4px solid transparent;
  border-bottom: 5px solid #111;
`;

const Actions = styled.div`
  display: flex;
  justify-content: flex-end;
  gap: 5px;
  margin-top: 8px;
  padding-right: 6px;
`;

const ActionBtn = styled.span`
  width: 54px;
  height: 24px;
  border: 1px solid #066a8c;
  color: #066a8c;
  text-align: center;
  font-size: 12px;
  line-height: 22px;
  white-space: pre;
`;

const B = ({ t, label, lines, w, ml, arrow = true }) => (
  <Big $w={w} $ml={ml}>
    <Ico s={32}>{t}</Ico>
    <BigLabel>{label}</BigLabel>
    {lines && <div>{lines}</div>}
    {arrow && <BigArrow $s={3} />}
  </Big>
);

const S = ({ t, label, w = 20, gap }) => (
  <SmallTool $gap={gap}>
    <Ico w={w} h={18} vb="0 0 20 20">{t}</Ico>
    {label}
  </SmallTool>
);

const Foot2 = ({ title }) => (
  <GroupFoot>
    <GroupTitle>{title}</GroupTitle>
    <Tri $s={3} />
  </GroupFoot>
);

const RibbonBar = () => (
  <Ribbon>
    <Group $w={99} $pl={4}>
      <GroupBody>
        <B t={I.ruler} label="测量" w={50} arrow={false} />
        <B t={I.surfMicro} label="更多" w={40} />
      </GroupBody>
      <Foot2 title="测量" />
    </Group>
    <Group $w={319} $pl={8}>
      <GroupBody>
        <B t={I.poles} label="显示极点" w={52} arrow={false} />
        <B t={I.knots} label="显示结点" w={52} arrow={false} />
        <B t={I.endpoint} label="显示端点" w={52} arrow={false} />
        <Stack $w={105} $ml={7}>
          <S t={Sm.mirror} label="镜像显示" />
          <S t={Sm.setMirror} label="设置镜像平面..." />
          <S t={Sm.third} label="显示面细节" />
        </Stack>
        <B t={I.magDiamond} label="更多" w={42} />
      </GroupBody>
      <Foot2 title="显示" />
    </Group>
    <Group $w={194} $pl={12}>
      <GroupBody>
        <Stack $w={88}>
          <S t={Sm.comb} label="显示曲率梳" />
          <S t={Sm.peak} label="显示峰值点" />
          <S t={Sm.third} label="显示极点" />
        </Stack>
        <B t={I.curveMicro} label="曲线分析" w={38} arrow={false} />
        <B t={I.graph} label="更多" w={42} ml={12} />
      </GroupBody>
      <Foot2 title="曲线形状" />
    </Group>
    <Group $w={224} $pl={10}>
      <GroupBody>
        <B t={I.section} label="截面分析" w={50} arrow={false} />
        <B t={I.reflect} label="反射" w={42} arrow={false} />
        <Stack $w={72} $ml={4}>
          <S t={Sm.highlight} label="高亮线" />
          <S t={Sm.draft} label="拔模分析" />
          <S t={Sm.curvature} label="面曲率" />
        </Stack>
        <B t={I.moreSurf} label="更多" w={42} ml={1} />
      </GroupBody>
      <Foot2 title="面形状" />
    </Group>
    <Group $w={194} $pl={10}>
      <GroupBody>
        <B t={I.deviation} label="偏差度量" w={50} arrow={false} />
        <Stack $w={86} $ml={4}>
          <S t={Sm.intersect} label="曲面相交" />
          <S t={Sm.contSurf} label="曲面连续性" />
          <S t={Sm.contCurve} label="曲线连续性" />
        </Stack>
        <B t={I.circlesRuler} label="更多" w={42} />
      </GroupBody>
      <Foot2 title="关系" />
    </Group>
    <Group $w={186} $pl={10}>
      <GroupBody>
        <B t={I.update} label="更新质量属性" w={72} arrow={false} />
        <B t={I.showPanel} label="显示质量" lines="属性面板" w={54} arrow={false} />
        <B t={I.blobRuler} label="更多" w={50} />
      </GroupBody>
      <Foot2 title="质量属性" />
    </Group>
    <Group $w={151} $pl={6}>
      <GroupBody>
        <B t={I.compare} label="比较体" w={44} arrow={false} />
        <B t={I.wall} label="检查壁厚" w={50} arrow={false} />
        <B t={I.qualityCheck} label="更多" w={42} ml={7} />
      </GroupBody>
      <Foot2 title="部件" />
    </Group>
    <EndArrow $s={3} $top={81} />
  </Ribbon>
);

const Tool = ({ t, w = 24, h = 26, vb = '0 0 26 26', ml, on }) => (
  <TbSlot $ml={ml} $on={on}><Ico w={w} h={h} vb={vb}>{t}</Ico></TbSlot>
);

const MainToolbar = () => (
  <Toolbar>
    <Burger />
    <MenuLabel>菜单(M)</MenuLabel>
    <Tri $ml={3} $s={3} />
    <Select $w={200} $ml={21} $fs={11}>无选择过滤器</Select>
    <Tool t={Bar.orangeTrim} ml={265} />
    <Tool t={Bar.orangeCube} ml={10} />
    <Tool t={Bar.orangeRect} ml={11} />
    <Tri $ml={8} $s={3} />
    <Tool t={Bar.view1} w={24} ml={9} on />
    <Tool t={Bar.view2} w={24} ml={2} on />
    <TbSep $ml={6} />
    <Select $w={49} $ml={12} $pl={1}><SelectText>50</SelectText><Tri $s={3.5} /></Select>
    <Tool t={Bar.cube} ml={9} />
    <Tool t={Bar.cubeGear} ml={8} />
    <Tool t={Bar.bracket} w={27} ml={10} />
    <Tri $ml={6} $s={3} />
    <Tool t={Bar.stack} ml={9} />
    <Tri $ml={8} $s={3} />
    <Tool t={Bar.doorWrench} ml={9} />
    <Tool t={Bar.doorToggle} ml={7} />
    <TbSep $ml={12} />
    <EndArrow $s={3} $top={21} />
  </Toolbar>
);

const Model = () => (
  <ModelSvg viewBox="245 220 1640 798" fill="none">
    <path
      d="M815 524 Q811 523 806 530 L647 712 Q642 717 650 718 L1141 761 Q1150 763 1156 758 L1320 568 Q1324 563 1316 562 L822 523 Z"
      fill="#ffff00"
      stroke="#5fae84"
      strokeWidth="2"
    />
    <path d="M726 620 C780 617 850 617 905 618 C960 620 1030 626 1079 634 C1110 639 1140 644 1162 648" stroke="#f59e3a" strokeWidth="3.5" />
    <path d="M1168 650 L1240 663" stroke="#e79a70" strokeWidth="1.5" />
    <path d="M1162 646 L1178 645 L1240 663 L1178 653 Z" fill="#b0995a" stroke="#8d7a45" />
    <path d="M1067 544 C1040 570 1010 590 982 627 C950 670 925 700 895 741" stroke="#5fae84" strokeWidth="2" />
    <path d="M1067 544 L1051 555 L1046 556 L1045 564 L1052 560 L1053 558 Z" fill="#b0995a" stroke="#a58f52" />
    <circle cx="984" cy="623" r="5" fill="#8f8248" />
    <circle cx="896" cy="741" r="5" fill="#a08d4c" />
    <path d="M895 745 L863 818" stroke="#7f7a4a" />
    <path d="M930 643 L947 641 L980 647 L947 647 Z" fill="#f2a6bb" stroke="#e78da6" strokeWidth=".5" />
    <path d="M1001 629 L986 647 L994 638 L1000 636 Z" fill="#8fd8cc" stroke="#7ac4b8" strokeWidth=".5" />
    <path d="M984 652 L988 686 L987 698 L984 686 Z" fill="#3e66e8" stroke="#3e66e8" strokeWidth=".5" />
    <text x="930" y="639" fill="#e04818" fontSize="11" fontFamily="Liberation Sans, sans-serif">XC</text>
    <text x="985" y="625" fill="#4aa51c" fontSize="11" fontFamily="Liberation Sans, sans-serif">YC</text>
    <text x="967" y="713" fill="#3366ff" fontSize="12" fontFamily="Liberation Sans, sans-serif">ZC</text>
  </ModelSvg>
);

const FloatTool = ({ t, ml, w = 26 }) => (
  <FloatSlot $ml={ml}><Ico w={w} h={26} vb="0 0 26 26">{t}</Ico></FloatSlot>
);

const SelectionBar = () => (
  <FloatBar>
    <Select $w={156} $ml={13} $pl={3} $fs={11}><SelectText>单条曲线</SelectText><Tri $s={3.5} /></Select>
    <FloatTool t={Float.trim1} ml={9} />
    <FloatTool t={Float.trim2} ml={6} />
    <FloatTool t={Float.trim3} ml={7} />
    <FloatTool t={Float.rects} ml={7} />
    <FloatTool t={Float.tree} ml={8} />
    <Dots>···</Dots>
    <FloatSep />
    <Tri $ml={5} $s={3} />
  </FloatBar>
);

const NxDialog = () => (
  <Dialog>
    <DialogHead>
      <Ico s={16} vb="0 0 16 16"><circle cx="8" cy="8" r="3.5" stroke="#fff" strokeWidth="2" /><circle cx="8" cy="8" r="6" stroke="#fff" strokeWidth="2" strokeDasharray="2.4 2.3" /></Ico>
      <DialogTitle>N 边曲面</DialogTitle>
      <Ico s={14} vb="0 0 14 14"><path d="M5 2a5.5 5.5 0 1 0 6 1M11 0v4H7" stroke="#fff" strokeWidth="1.5" transform="rotate(10 7 7)" /></Ico>
      <HeadBtn $ml={3}>?</HeadBtn>
      <Ico s={14} vb="0 0 14 14"><path d="M2 2l10 10M12 2L2 12" stroke="#fff" strokeWidth="1.6" /></Ico>
    </DialogHead>
    <DialogBody>
      <Section $h={44}>
        <Row $h={25} $mt={9}>
          <Select $w={298} $h={25} $pl={4}>
            <Ico s={16} vb="0 0 17 16">{Dlg.trimmed}</Ico>
            <SelectText>已修剪</SelectText>
            <Tri $s={3.5} />
          </Select>
        </Row>
      </Section>
      <Section $h={71}>
        <SecTitle><Tri $s={4} $c="#0a6d8c" />外环</SecTitle>
        <Row $h={32} $mt={4}>
          <Left><Ico s={16} vb="0 0 16 16">{Dlg.check}</Ico>选择曲线 (8)</Left>
          <Btn $s={32}><Ico s={30}>{Dlg.curve}</Ico></Btn>
        </Row>
      </Section>
      <Section $h={24}>
        <SecTitle $closed><RightTri />约束面</SecTitle>
      </Section>
      <Section $h={445}>
        <SecTitle><Tri $s={4} $c="#0a6d8c" />UV 方向</SecTitle>
        <Row $h={24} $mt={4}>
          UV 方向
          <Select $w={141} $h={24} $pl={5}><SelectText>区域</SelectText><Tri $s={3.5} /></Select>
        </Row>
        <Inset $h={272} $mt={3}>
          <BoxTitle><Tri $s={3.5} $c="#0a6d8c" />内部曲线</BoxTitle>
          <Row $h={32} $mt={5}>
            <YellowRow><Ico s={16} vb="0 0 16 16">{Dlg.check}</Ico>选择曲线 (1)</YellowRow>
            <Btns>
              <Btn $s={24}><Ico s={22} vb="0 0 24 24">{Dlg.cross}</Ico></Btn>
              <Btn $s={32} $flat $bg="#ffdf72"><Ico s={32}>{Dlg.curveCircle}</Ico></Btn>
            </Btns>
          </Row>
          <Row $h={32} $mt={2} $dim>
            指定原点曲线
            <Btn $s={32} $off><Ico s={30}>{Dlg.origin}</Ico></Btn>
          </Row>
          <Row $h={24} $mt={2}>
            添加新集
            <Btn $s={24} $flat $bg="#7ab4ca"><Ico s={24} vb="0 0 24 24">{Dlg.plus}</Ico></Btn>
          </Row>
          <ListBox>
            <BoxTitle><Tri $s={3.5} $c="#0a6d8c" />列表</BoxTitle>
            <ListWrap>
              <Table>
                <TableRow><Cell>内部曲线 1</Cell><span /></TableRow>
                <TableRow $sel><Cell>内部曲线 2</Cell><span /></TableRow>
                <TableRow><Cell /><span /></TableRow>
                <TableRow $alt><Cell /><span /></TableRow>
              </Table>
              <ListBtns>
                <Btn $s={24}><Ico s={22} vb="0 0 24 24">{Dlg.close}</Ico></Btn>
                <Btn $s={24}><Ico s={22} vb="0 0 24 24">{Dlg.up}</Ico></Btn>
                <Btn $s={24} $off><Ico s={22} vb="0 0 24 24">{Dlg.down}</Ico></Btn>
              </ListBtns>
            </ListWrap>
          </ListBox>
        </Inset>
        <Inset $h={104} $mt={2}>
          <BoxTitle><Tri $s={3.5} $c="#0a6d8c" />定义矩形</BoxTitle>
          <Row $h={32} $mt={5}>
            指定点 1
            <Btns>
              <Btn $s={24}><Ico s={22} vb="0 0 24 24">{Dlg.points}</Ico></Btn>
              <Btn $s={32}><Ico s={30}>{Dlg.cross2}</Ico></Btn>
            </Btns>
          </Row>
          <Row $h={32} $mt={2}>
            重置矩形
            <Btn $s={32}><Ico s={30}>{Dlg.reset}</Ico></Btn>
          </Row>
        </Inset>
      </Section>
      <Section $h={24}>
        <SecTitle $closed><RightTri />形状控制</SecTitle>
      </Section>
      <Section $h={149}>
        <SecTitle><Tri $s={4} $c="#0a6d8c" />设置</SecTitle>
        <Row $h={16} $mt={7}>
          <Left>
            <CheckBox><Ico s={9} vb="0 0 10 10"><path d="M1 5l3 3 5-7" stroke="#333" /></Ico></CheckBox>
            修剪到边界
          </Left>
        </Row>
        <Inset $h={87} $mt={4}>
          <BoxTitle><Tri $s={3.5} $c="#0a6d8c" />公差</BoxTitle>
          <Row $h={23} $mt={5}>
            G0（位置）
            <NumInput>0. 00<Unit>mm</Unit></NumInput>
          </Row>
          <Row $h={23} $mt={2}>
            G1（相切）
            <NumInput>0. 05<Unit>°</Unit></NumInput>
          </Row>
        </Inset>
      </Section>
    </DialogBody>
    <Foot>
      <FootRow>
        <Left>
          <CheckBox><Ico s={9} vb="0 0 10 10"><path d="M1 5l3 3 5-7" stroke="#333" /></Ico></CheckBox>
          预览
        </Left>
        <Left $gap={2}>
          显示结果
          <Btn $s={24}><Ico s={22} vb="0 0 22 22">{Dlg.mag}</Ico></Btn>
        </Left>
      </FootRow>
      <FootArrow><UpTri /></FootArrow>
      <Actions>
        <ActionBtn>{'< 确定 >'}</ActionBtn>
        <ActionBtn>取消</ActionBtn>
      </Actions>
    </Foot>
  </Dialog>
);

const Tree = () => (
  <Rows>
    <TreeRow>
      <GuideV $x={9} $t={10} />
      <GuideH $x={9} $w={10} />
      <Ico s={16} vb="0 0 16 16"><circle cx="8" cy="8" r="7" stroke="#333" /><path d="M8.5 3v5.5H4" stroke="#333" /></Ico>
      历史记录建模模式
    </TreeRow>
    <TreeRow $alt>
      <GuideV $x={9} />
      <GuideH $x={14} $w={5} />
      <Expander>+</Expander>
      <Ico s={16} vb="0 0 16 16"><rect x="1" y="1" width="14" height="14" stroke="#333" fill="#fff" /><path d="M1 3h14" stroke="#333" /><path d="M5 12l1-5 3-1 3 4-1 2z" fill="#888" /></Ico>
      模型视图
    </TreeRow>
    <TreeRow $gap={0}>
      <GuideV $x={9} />
      <GuideH $x={14} $w={5} />
      <Expander>+</Expander>
      <Ico s={16} vb="0 0 16 16">{Dlg.check}</Ico>
      <Ico s={15} vb="0 0 16 16"><path d="M1 6l11-5-2 14-8 0z" fill="#fff" stroke="#e57a14" /><rect x="5" y="6" width="6" height="5" fill="#777" /></Ico>
      <Left>&nbsp;摄像机</Left>
    </TreeRow>
    <TreeRow $alt $gap={0}>
      <GuideV $x={9} />
      <GuideH $x={14} $w={5} />
      <Expander>+</Expander>
      <Ico s={16} vb="0 0 16 16">{Dlg.check}</Ico>
      <Ico w={17} h={14} vb="0 0 17 14"><path d="M1 2h11v7M3 4h13v9H3z" stroke="#333" fill="#fff" /><path d="M11 9h4v3h-4z" stroke="#333" /></Ico>
      <Left>&nbsp;图纸</Left>
    </TreeRow>
    <TreeRow>
      <GuideV $x={9} />
      <GuideH $x={14} $w={5} />
      <Expander>+</Expander>
      <Ico w={16} h={14} vb="0 0 16 14"><path d="M1 13V1h5l1 2h7v3M1 13l3-7h11l-3 7z" stroke="#333" fill="#fff" /></Ico>
      非时间戳记几何体
    </TreeRow>
    <TreeRow $alt $gap={1}>
      <GuideV $x={9} $b={10} />
      <Expander>−</Expander>
      <Ico s={15} vb="0 0 16 16"><circle cx="8" cy="8" r="7" fill="#35d135" stroke="#1a8a1a" /><circle cx="6" cy="5" r="2.5" fill="#bff0bf" /></Ico>
      <Ico s={16} vb="0 0 16 16"><rect x="1" y="1" width="14" height="14" stroke="#888" fill="#fff" /><rect x="4" y="3" width="7" height="7" stroke="#444" /><rect x="6" y="6" width="7" height="7" fill="#ee8510" stroke="#444" /></Ico>
      <Left>&nbsp;模型历史记录</Left>
    </TreeRow>
    <TreeRow $pl={38} $gap={0} $dim>
      <GuideV $x={27} />
      <GuideH $x={27} $w={11} />
      <Ico s={16} vb="0 0 16 16"><path d="M1 8c4-5 10-5 14 0-4 5-10 5-14 0z" stroke="#333" /><circle cx="8" cy="8" r="2.5" stroke="#333" /><path d="M2 15L14 1" stroke="#333" /></Ico>
      <Ico s={16} vb="0 0 16 16"><circle cx="5" cy="5" r="4" fill="#d21f1f" /><path d="M3 3l4 4" stroke="#fff" /><path d="M3 12l5-3 6 2-3 4H5z" fill="#2e6be0" stroke="#163e90" /><path d="M9 5h5v5" stroke="#333" /></Ico>
      <Left>&nbsp;体 (96)</Left>
    </TreeRow>
    <TreeRow $pl={38} $gap={0} $dim $bold $alt>
      <GuideV $x={27} />
      <GuideH $x={27} $w={11} />
      <Ico s={16} vb="0 0 16 16"><path d="M1 8c4-5 10-5 14 0-4 5-10 5-14 0z" stroke="#333" /><circle cx="8" cy="8" r="2.5" stroke="#333" /><path d="M2 15L14 1" stroke="#333" /></Ico>
      <Ico s={16} vb="0 0 16 16"><path d="M2 12L9 2c3-1 5 1 5 3l-6 9c-2 1-5 1-6-2z" fill="#8fd8ee" stroke="#18a8d0" /></Ico>
      <Left>&nbsp;填充曲面 (98)</Left>
    </TreeRow>
    <TreeRow $pl={38} $gap={0} $dim>
      <GuideV $x={27} $b={10} />
      <GuideH $x={27} $w={11} />
      <Ico s={16} vb="0 0 16 16"><path d="M1 8c4-5 10-5 14 0-4 5-10 5-14 0z" stroke="#333" /><circle cx="8" cy="8" r="2.5" stroke="#333" /><path d="M2 15L14 1" stroke="#333" /></Ico>
      <Ico s={16} vb="0 0 16 16"><path d="M2 12L9 2c3-1 5 1 5 3l-6 9c-2 1-5 1-6-2z" fill="#bbb" stroke="#444" /><path d="M6 11c1-3 4-5 7-5" stroke="#18a8d0" /></Ico>
      <Left>&nbsp;N 边曲面 (99)</Left>
    </TreeRow>
    {Array.from({ length: 24 }, (_, i) => <TreeRow key={i} $alt={i % 2 === 0} />)}
  </Rows>
);

const railIcons = [
  { t: Rail.gear, h: 26, s: 16, vb: '0 0 16 16' },
  { t: Rail.gears, h: 40, mt: 17, s: 24, vb: '0 0 24 24' },
  { t: Rail.blocks, h: 38, s: 26, vb: '0 0 28 28' },
  { t: Rail.orangeBow, h: 36, mt: 9, s: 26, vb: '0 0 28 28' },
  { t: Rail.bracket, h: 45, on: true, s: 26, vb: '0 0 28 28' },
  { t: Rail.book, h: 38, s: 26, vb: '0 0 28 28' },
  { t: Rail.dimBracket, h: 48, s: 26, vb: '0 0 28 28' },
  { t: Rail.dimMag, h: 38, s: 26, vb: '0 0 28 28' },
  { t: Rail.globe, h: 68, s: 26, vb: '0 0 26 26' },
  { t: Rail.clock, h: 40, s: 24, vb: '0 0 24 24' },
];

const rightIcons = ['show', 'hide', 'tank', 'curveWrench', 'uBlock', 'tankPie', 'diamond', 'rings', 'copy', 'bow'];

export default function App() {
  return (
    <Root>
      <GlobalStyle />
      <Head>
        <TitleRow>
          <Quick>
            <NxLogo>NX</NxLogo>
            <QaSlot $ml={9}><Ico s={17} vb="0 0 18 18">{Qa.save}</Ico></QaSlot>
            <QaSep $ml={6} />
            <QaSlot $ml={6}><Ico s={16} vb="0 0 18 18">{Qa.undo}</Ico></QaSlot>
            <Tri $ml={9} $s={3} $c="#27799a" />
            <QaSlot $ml={8}><Ico s={16} vb="0 0 18 18">{Qa.redo}</Ico></QaSlot>
            <QaSep $ml={6} />
            <QaSlot $ml={6}><Ico s={16} vb="0 0 18 18">{Qa.fan}</Ico></QaSlot>
            <QaSlot $ml={9}><Ico s={16} vb="0 0 18 18">{Qa.copy}</Ico></QaSlot>
            <QaSlot $ml={5}><Ico s={16} vb="0 0 18 18">{Qa.paste}</Ico></QaSlot>
            <QaSlot $ml={11}><Ico s={16} vb="0 0 18 18">{Qa.sel}</Ico></QaSlot>
            <QaSep $ml={1} />
            <QaSlot $ml={7}><Ico s={17} vb="0 0 18 18">{Qa.tool}</Ico></QaSlot>
            <Tri $ml={6} $s={3} $c="#fff" />
            <QaSep $ml={7} />
            <QaSlot $ml={6}><Ico s={17} vb="0 0 18 18">{Qa.mic}</Ico></QaSlot>
            <QaSep $ml={5} />
            <QaSlot $ml={5}><Ico s={17} vb="0 0 18 18">{Qa.erase}</Ico></QaSlot>
            <QaSep $ml={6} />
            <QaSlot $ml={5}><Ico s={17} vb="0 0 18 18">{Qa.win1}</Ico></QaSlot>
            <QaSlot $ml={6}><Ico s={17} vb="0 0 18 18">{Qa.win2}</Ico></QaSlot>
            <TitleText $ml={3}>窗口</TitleText>
            <Tri $ml={4} $s={3} $c="#fff" />
            <Tri $ml={7} $s={3} $c="#fff" />
          </Quick>
          <TitleText>by:</TitleText>
          <Redacted />
          <TitleText>- 建模</TitleText>
          <WinGroup>
            <Siemens>SIEMENS</Siemens>
            <Ico w={14} h={14} vb="0 0 14 14"><path d="M1 12h10" stroke="#fff" strokeWidth="2" /></Ico>
            <QaSlot $ml={8}><Ico s={14} vb="0 0 14 14"><path d="M1 5h9v8H1zM4 5V1h9v8h-3" stroke="#fff" strokeWidth="1.2" /></Ico></QaSlot>
            <QaSlot $ml={9}><Ico s={14} vb="0 0 14 14"><path d="M2 2l10 10M12 2L2 12" stroke="#fff" strokeWidth="1.6" /></Ico></QaSlot>
          </WinGroup>
        </TitleRow>
        <TabRow>
          <Tab>文件(F)</Tab>
          <Tab $ml={9}>主页</Tab>
          {['装配', '曲线', '曲面'].map(t => <Tab key={t}>{t}</Tab>)}
          <Tab $on>分析</Tab>
          {['视图', '渲染', '工具', 'PMI', '应用模块', '运动模拟设计', '结构焊接'].map(t => <Tab key={t}>{t}</Tab>)}
        </TabRow>
        <SearchBox>
          在此输入以搜索
          <Ico s={18} vb="0 0 22 22">{Dlg.mag}</Ico>
        </SearchBox>
        <HeadTools>
          <Ico s={16} vb="0 0 16 16"><path d="M1 5V1h4M11 1h4v4M15 11v4h-4M5 15H1v-4" stroke="#fff" /></Ico>
          <QaSlot $ml={9}><Ico w={18} h={16} vb="0 0 18 16"><path d="M1 12l8-8 8 8" stroke="#fff" /></Ico></QaSlot>
          <QaSlot $ml={9}><Ico s={16} vb="0 0 16 16"><circle cx="8" cy="8" r="7" stroke="#fff" /><path d="M6 6c0-3 5-3 5 0 0 2-3 2-3 4M8 12v1" stroke="#fff" /></Ico></QaSlot>
          <QaSlot $ml={17}><Ico w={4} h={18} vb="0 0 4 18"><path d="M2 1v11M2 14v3" stroke="#fff" strokeWidth="2" /></Ico></QaSlot>
        </HeadTools>
      </Head>
      <RibbonBar />
      <MainToolbar />
      <Main>
        <LeftRail>
          {railIcons.map((r, i) => (
            <RailItem key={i} $h={r.h} $mt={r.mt} $on={r.on}>
              <Ico s={r.s} vb={r.vb}>{r.t}</Ico>
            </RailItem>
          ))}
        </LeftRail>
        <Navigator>
          <NavHead>部件导航器<Maximize /></NavHead>
          <NavTable>
            <NavHeader>名称<UpTri /></NavHeader>
            <Tree />
            <HScroll>
              <Thumb />
              <ScrollRow><span>‹</span><span>›</span></ScrollRow>
            </HScroll>
          </NavTable>
          <Splitter />
          {['搜索', '相关性', '细节', '预览'].map(t => (
            <NavFold key={t}><RightTri />{t}</NavFold>
          ))}
        </Navigator>
        <Viewport>
          <ViewTop />
          <Canvas>
            <Model />
            <SelectionBar />
            <Callout><Grip />外环</Callout>
          </Canvas>
        </Viewport>
        <RightRail>
          {rightIcons.map(k => (
            <RightItem key={k}><Ico s={26} vb="0 0 26 26">{RR[k]}</Ico></RightItem>
          ))}
          <RightSep />
        </RightRail>
      </Main>
      <Status>
        <StatusText>Select curve, or use MB2 to complete selection</StatusText>
        <StatusCenter>样条 已选定</StatusCenter>
      </Status>
      <Taskbar><TaskPatch /></Taskbar>
      <NxDialog />
      <MiniTri />
      <Ime>
        <ImeLang>英</ImeLang>
        <ImeSlot $ml={10}><Ico w={14} h={14} vb="0 0 14 14"><circle cx="3" cy="5" r="2" fill="#1a6ee0" /><circle cx="11" cy="8" r="2" fill="#1a6ee0" /></Ico></ImeSlot>
        <ImeSlot $ml={8}><Ico w={16} h={18} vb="0 0 16 18"><rect x="5" y="1" width="6" height="10" rx="3" fill="#1a6ee0" /><path d="M2 8c0 7 12 7 12 0" stroke="#1a6ee0" strokeWidth="1.6" /></Ico></ImeSlot>
        <ImeSlot $ml={6}><Ico w={16} h={14} vb="0 0 16 14"><rect x="1" y="1" width="14" height="11" fill="#1a6ee0" /><path d="M3 4h10M3 7h10" stroke="#fff" strokeDasharray="1.5 1" /></Ico></ImeSlot>
        <ImeSlot $ml={7}><Ico w={18} h={16} vb="0 0 18 16"><path d="M1 3l4-2h8l4 2-2 4-2-1v9H5V6L3 7z" fill="#7a5fd8" /></Ico></ImeSlot>
        <ImeSlot $ml={6}><Ico w={16} h={16} vb="0 0 16 16"><g fill="#1a6ee0"><rect x="1" y="1" width="6" height="6" rx="2" /><rect x="9" y="1" width="6" height="6" rx="2" /><rect x="1" y="9" width="6" height="6" rx="2" /><rect x="9" y="9" width="6" height="6" rx="2" /></g></Ico></ImeSlot>
      </Ime>
      <ImeLogo>S</ImeLogo>
      <Watermark>UG爱好者论坛 wwinkcun</Watermark>
    </Root>
  );
}
